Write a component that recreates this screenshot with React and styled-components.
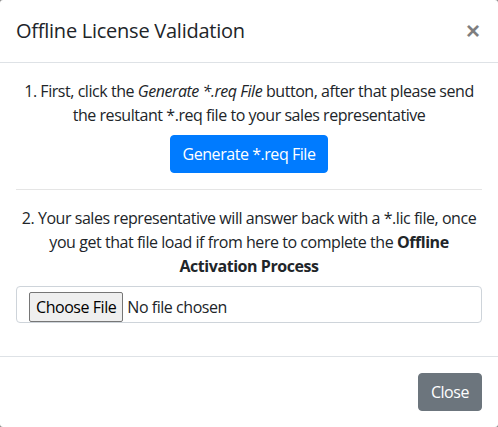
import React from "react";
import styled, { createGlobalStyle } from "styled-components";

const Global = createGlobalStyle`
  html, body { margin: 0; padding: 0; background: #8a8a8a; }
  body { font-family: "Open Sans", "Noto Sans", sans-serif; color: #212529; }
  * { box-sizing: border-box; }
`;

const Modal = styled.div`
  width: 498px;
  height: 427px;
  background: #fff;
  border-radius: 3px;
  display: flex;
  flex-direction: column;
  font-size: 16px;
  line-height: 1.5;
  letter-spacing: -0.45px;
`;

const Header = styled.div`
  display: flex;
  align-items: center;
  justify-content: space-between;
  padding: 16px;
  border-bottom: 1px solid #dee2e6;
`;

const Title = styled.h5`
  margin: 0;
  font-size: 20px;
  font-weight: 500;
  line-height: 30px;
  letter-spacing: -0.25px;
`;

const CloseX = styled.button`
  border: 0;
  background: transparent;
  padding: 0;
  margin-right: 2px;
  font-size: 24px;
  font-weight: 700;
  line-height: 1;
  color: #000;
  opacity: 0.5;
  font-family: "Liberation Sans", sans-serif;
`;

const Body = styled.div`
  padding: 16px;
  flex: 1;
  text-align: center;
`;

const Para = styled.p`
  margin: 0 0 8px;
`;

const PrimaryButton = styled.button`
  font-family: inherit;
  font-size: 16px;
  line-height: 24px;
  letter-spacing: inherit;
  padding: 6px 12px;
  border-radius: 4px;
  border: 1px solid ${(p) => (p.$variant === "secondary" ? "#6c757d" : "#007bff")};
  background: ${(p) => (p.$variant === "secondary" ? "#6c757d" : "#007bff")};
  color: #fff;
  height: 38px;
`;

const Rule = styled.hr`
  margin: 16px 0;
  border: 0;
  border-top: 1px solid rgba(0, 0, 0, 0.1);
`;

const FileBox = styled.div`
  display: flex;
  align-items: center;
  height: 37px;
  margin-top: 8px;
  margin-bottom: 16px;
  padding: 5px 12px 0;
  border: 1px solid #ced4da;
  border-radius: 4px;
  text-align: left;
`;

const FileButton = styled.span`
  display: inline-flex;
  align-items: center;
  height: 30px;
  padding: 0 6px;
  background: #efefef;
  border: 1px solid #767676;
  border-radius: 2px;
  color: #000;
  font-size: 16px;
  margin-right: 4px;
`;

const FileText = styled.span`
  color: #212529;
`;

const Footer = styled.div`
  display: flex;
  justify-content: flex-end;
  padding: 16px;
  border-top: 1px solid #dee2e6;
`;

export default function App() {
  return (
    <>
      <Global />
      <Modal>
        <Header>
          <Title>Offline License Validation</Title>
          <CloseX aria-label="Close">×</CloseX>
        </Header>
        <Body>
          <Para>
            1. First, click the <em>Generate *.req File</em> button, after that please send
            <br />
            the resultant *.req file to your sales representative
          </Para>
          <PrimaryButton>Generate *.req File</PrimaryButton>
          <Rule />
          <Para>
            2. Your sales representative will answer back with a *.lic file, once
            <br />
            you get that file load if from here to complete the <strong>Offline</strong>
            <br />
            <strong>Activation Process</strong>
          </Para>
          <FileBox>
            <FileButton>Choose File</FileButton>
            <FileText>No file chosen</FileText>
          </FileBox>
        </Body>
        <Footer>
          <PrimaryButton $variant="secondary">Close</PrimaryButton>
        </Footer>
      </Modal>
    </>
  );
}
